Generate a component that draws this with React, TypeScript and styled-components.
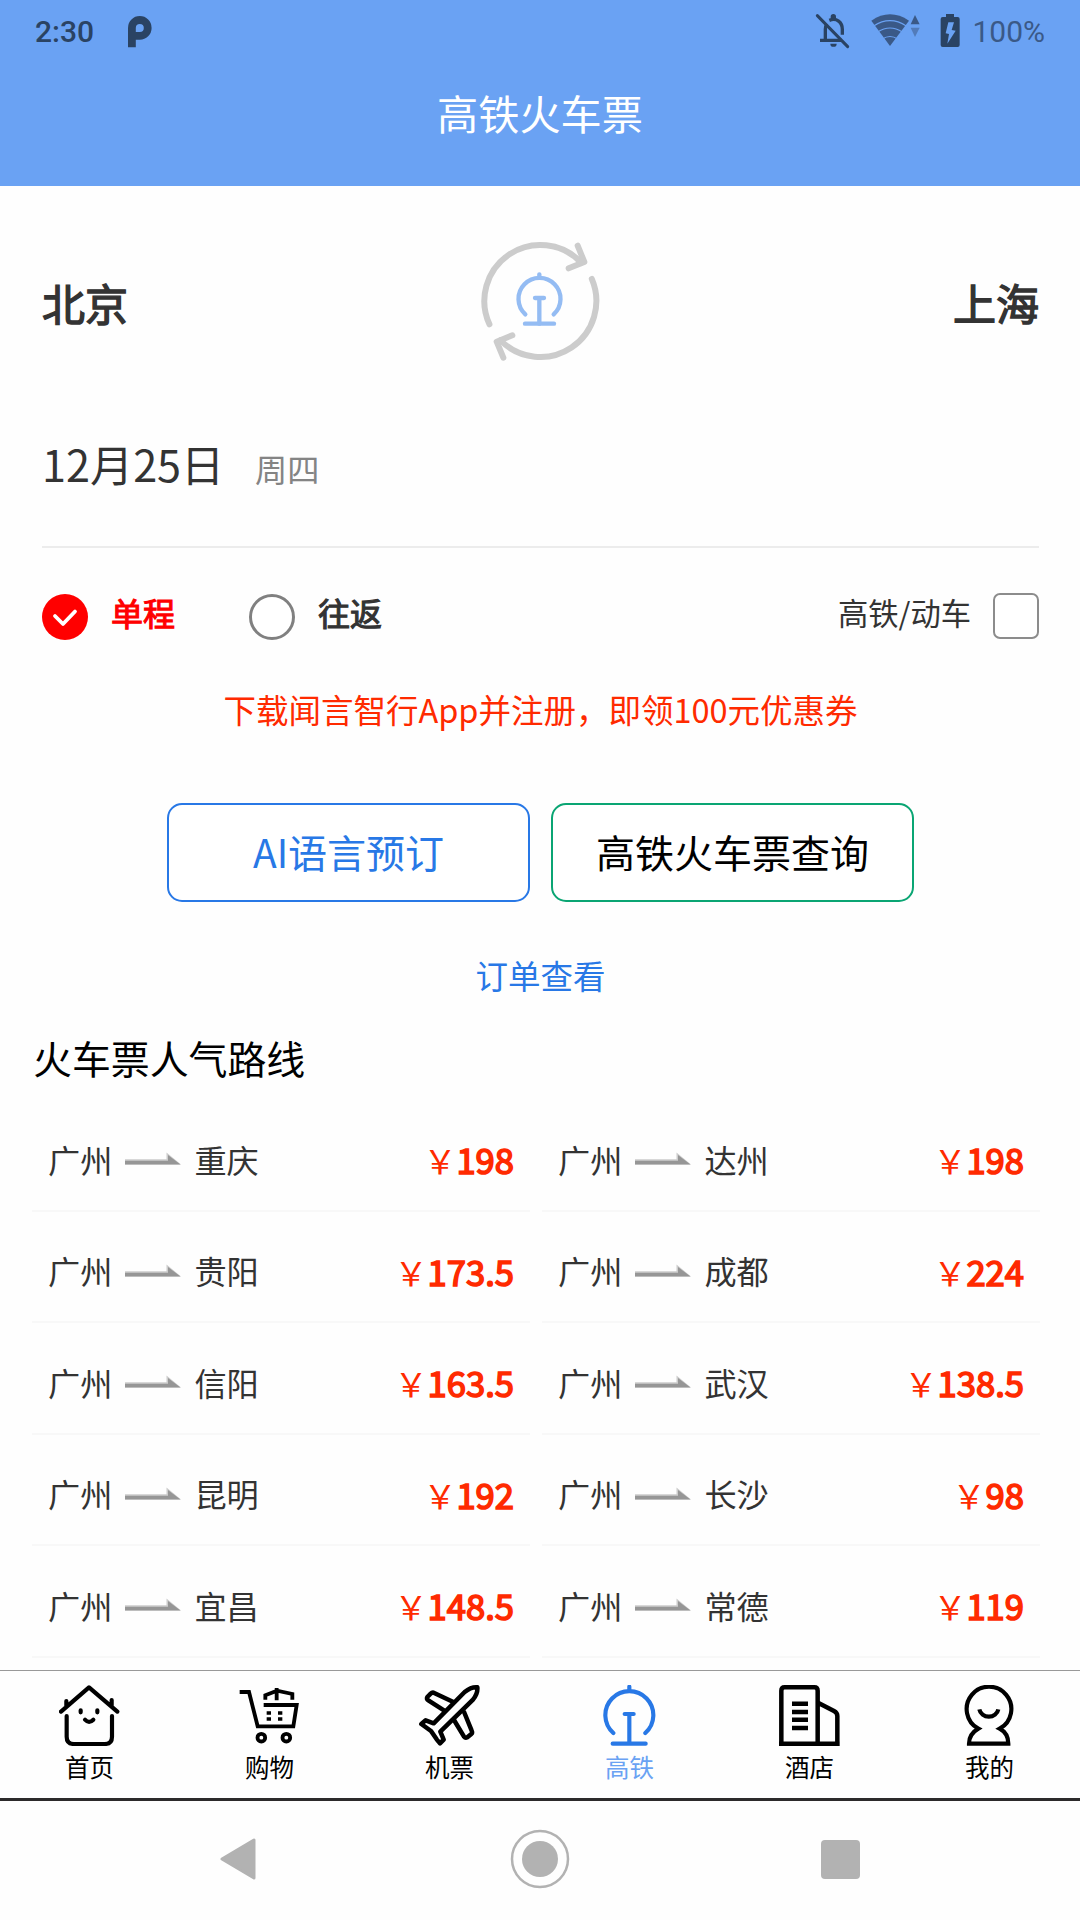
import React from "react";
import styled, { createGlobalStyle } from "styled-components";

const GlobalStyle = createGlobalStyle`
  * { box-sizing: border-box; }
  body { margin: 0; background: #fefefe; }
`;

const BLUE = "#2878e6";
const HEADER = "#6aa2f3";
const RED = "#ff2a00";

const Screen = styled.div`
  width: 1080px;
  height: 1920px;
  display: flex;
  flex-direction: column;
  overflow: hidden;
  background: #fefefe;
  color: #333;
  font-family: "Noto Sans CJK SC", "Noto Sans", sans-serif;
`;

const Header = styled.header`
  height: 186px;
  background: ${HEADER};
`;

const StatusBar = styled.div`
  height: 63px;
  padding: 0 35px;
  display: flex;
  align-items: center;
  justify-content: space-between;
  font-family: Roboto, sans-serif;
  font-size: 30px;
  line-height: 63px;
`;

const StatusGroup = styled.div`
  display: flex;
  align-items: center;
`;

const Clock = styled.span`
  width: 93px;
  font-weight: 500;
  color: #2a4363;
`;

const Percent = styled.span`
  color: #3a5987;
  font-size: 30px;
`;

const Title = styled.h1`
  margin: 0;
  height: 104px;
  line-height: 98px;
  text-align: center;
  font-size: 41.2px;
  font-weight: 400;
  color: #fff;
`;

const SearchPanel = styled.section`
  padding: 0 41px 0 42px;
`;

const CityRow = styled.div`
  height: 232px;
  display: flex;
  align-items: center;
  justify-content: space-between;
`;

const City = styled.div<{ $end?: boolean }>`
  width: 120px;
  padding-bottom: 1px;
  font-size: 43px;
  line-height: 60px;
  -webkit-text-stroke: 1.4px #333;
  text-align: ${(p) => (p.$end ? "right" : "left")};
`;

const SwapSvg = styled.svg`
  margin: 0 1px 4px 0;
`;

const DateRow = styled.div`
  height: 130px;
  display: flex;
  align-items: baseline;
  padding-top: 14px;
  border-bottom: 2px solid #ececec;
  line-height: 63px;
`;

const DateText = styled.span`
  font-size: 43.2px;
  width: 213px;
`;

const Weekday = styled.span`
  font-size: 32.2px;
  line-height: 50px;
  margin-bottom: 2px;
  color: #848484;
`;

const OptionRow = styled.div`
  height: 138px;
  display: flex;
  align-items: center;
`;

const Radio = styled.span<{ $on?: boolean }>`
  width: 46px;
  height: 46px;
  border-radius: 50%;
  border: ${(p) => (p.$on ? "0" : "3px solid #808080")};
  background: ${(p) => (p.$on ? "#f00" : "#fff")};
  display: flex;
`;

const OptionLabel = styled.span<{ $on?: boolean }>`
  width: 138px;
  margin-left: 23px;
  padding-bottom: 10px;
  font-size: 32px;
  line-height: 40px;
  color: ${(p) => (p.$on ? "#f00" : "#333")};
  -webkit-text-stroke: 1.1px ${(p) => (p.$on ? "#f00" : "#333")};
`;

const TypeLabel = styled.span`
  margin-left: auto;
  margin-right: 22px;
  padding-bottom: 10px;
  font-size: 30.3px;
  line-height: 40px;
`;

const Checkbox = styled.span`
  width: 46px;
  height: 46px;
  margin-bottom: 2px;
  border: 2px solid #8c8c8c;
  border-radius: 7px;
  background: #fff;
`;

const Promo = styled.p`
  margin: 0;
  height: 117px;
  line-height: 46px;
  text-align: center;
  font-size: 32.5px;
  color: ${RED};
`;

const ButtonRow = styled.div`
  display: flex;
  justify-content: center;
  gap: 21px;
`;

const ActionButton = styled.button<{ $line: string; $text: string }>`
  width: 363px;
  height: 99px;
  padding: 0 0 4px;
  border: 2px solid ${(p) => p.$line};
  border-radius: 15px;
  background: #fff;
  color: ${(p) => p.$text};
  font-family: inherit;
  font-size: 39px;
`;

const OrderLink = styled.a`
  display: block;
  height: 128px;
  padding-top: 50px;
  line-height: 46px;
  text-align: center;
  font-size: 32.5px;
  color: ${BLUE};
`;

const RoutesTitle = styled.h2`
  margin: 0;
  height: 70px;
  padding-left: 33px;
  line-height: 54px;
  font-size: 38.9px;
  font-weight: 400;
  color: #000;
`;

const RouteGrid = styled.section`
  display: grid;
  grid-template-columns: 498px 498px;
  column-gap: 12px;
  grid-auto-rows: 111.5px;
  padding-left: 32px;
`;

const RouteRow = styled.div`
  display: flex;
  align-items: center;
  padding: 14px 16px 6px 16px;
  border-bottom: 2px solid #f8f8f8;
  font-size: 32.2px;
  line-height: 44px;
`;

const ArrowSvg = styled.svg`
  margin: 0 13px;
`;

const Price = styled.span`
  margin-left: auto;
  padding-top: 2px;
  color: ${RED};
  display: flex;
  align-items: baseline;
  font-size: 33px;
`;

const Amount = styled.span`
  font-size: 34.6px;
  font-weight: 400;
  -webkit-text-stroke: 1.6px ${RED};
`;

const TabBar = styled.nav`
  height: 131px;
  margin-top: auto;
  display: grid;
  grid-template-columns: repeat(6, 1fr);
  border-top: 1px solid #999;
  border-bottom: 3px solid #2c2a2b;
  background: #fefefe;
`;

const Tab = styled.div<{ $active?: boolean }>`
  display: flex;
  flex-direction: column;
  align-items: center;
  padding: 14px 1px 0 0;
  font-size: 24.5px;
  line-height: 36px;
  color: ${(p) => (p.$active ? HEADER : "#000")};
  svg { margin-bottom: 3px; }
`;

const SystemNav = styled.footer`
  height: 119px;
  display: flex;
  align-items: center;
  justify-content: space-between;
  padding: 0 220px 3px;
`;

const HomeKey = styled.svg`
  margin: 0 -1px 1px 1px;
`;

const Body = styled.main`
  height: 1484px;
  overflow: hidden;
`;

const PIcon = () => (
  <svg width="24" height="32" viewBox="128 15.5 24 32" fill="none">
    <path d="M131.9 46.8V27.4a7.9 7.9 0 1 1 7.9 7.9h-7.9" stroke="#2a4363" strokeWidth="7.8" />
  </svg>
);

const StatusIcons = () => (
  <svg width="159" height="63" viewBox="100 0 477 189" fill="none">
    <g stroke="#2a4363" strokeWidth="10">
      <path d="M137 121V88q0-9 4-16M121 121h66M149 61c22-9 39 6 39 27v16" />
      <path d="M113 47l91 93" strokeWidth="9" strokeLinecap="round" />
    </g>
    <path d="M153 56v-6a8 8 0 0 1 16 0v6zM152 131h19a9.500 9.500 0 0 1-19 0z" fill="#2a4363" />
    <path d="M331 138L275 62Q331 24 388 62Z" fill="#3a5987" />
    <g stroke={HEADER} strokeWidth="3.500">
      <path d="M282 78Q331 46 380 78M294 96Q331 72 368 96M308 117Q331 102 354 117" />
    </g>
    <path d="M406 45l14 28h-27z" fill="#3a5987" />
    <path d="M393 83h27l-14 28z" fill="#527bb9" />
    <path d="M499 42h24v9h11q6 0 6 6v78q0 6-6 6h-45q-6 0-6-6V57q0-6 6-6h10z" fill="#2a4363" />
    <path d="M506 67h17l-7 23 12 2-25 39 5-29-10-2z" fill={HEADER} />
  </svg>
);

const SwapIcon = () => (
  <SwapSvg width="160" height="160" viewBox="0 0 480 480" fill="none" strokeLinecap="round">
    <g stroke="#ccc" strokeWidth="18">
      <path d="M88.300 312.900A168 168 0 0 1 362.700 127.100M395.400 176.800A168 168 0 0 1 121.200 360.800" />
      <path d="M353 77l20 49-47 19M157 346l-47 19 20 48" strokeLinejoin="round" />
    </g>
    <g stroke="#94bcf3" strokeWidth="13">
      <path d="M196 283A63 63 0 1 1 281 283M238 163v10M225 234h27M238 234v77" />
      <path d="M195 311h87" />
    </g>
  </SwapSvg>
);

const CheckIcon = () => (
  <svg width="46" height="46" viewBox="0 0 46 46" fill="none">
    <path d="M13 22l8 8 12-12.500" stroke="#fff" strokeWidth="3.800" strokeLinecap="round" strokeLinejoin="round" />
  </svg>
);

const RouteArrow = () => (
  <ArrowSvg width="56" height="13" viewBox="0 0 56 13">
    <path d="M0 7.200h41.500V.5L56 12.500H0z" fill="#ccc" />
    <path d="M0 8.700h43V3L55.500 12.500H0z" fill="#969696" />
  </ArrowSvg>
);

const icons: Record<string, React.ReactNode> = {
  home: (
    <svg width="61" height="61" viewBox="178 135 183 183" fill="none" stroke="#000" strokeWidth="12.500" strokeLinecap="round" strokeLinejoin="round">
      <path d="M184 215L268 142L353 215M200 183v15M336 180v18M201 228v62q0 22 22 22h92q22 0 22-22v-62" />
      <path d="M243 211v6M293 211v6M256 239q12 13 25 0" />
    </svg>
  ),
  cart: (
    <svg width="61" height="61" viewBox="718 135 183 183" fill="none" stroke="#000" strokeWidth="11.500">
      <path d="M720 156h28l26 103h107l10-64h-99" />
      <path d="M797 179v-13l35-14 46 10v17M831 144v37" />
      <path d="M801 219h13M835 219h13M801 237h13M835 237h13" strokeWidth="11" />
      <circle cx="785" cy="293" r="11.500" />
      <circle cx="860" cy="293" r="11.500" />
    </svg>
  ),
  plane: (
    <svg width="61" height="61" viewBox="178 135 183 183" fill="none" stroke="#000" strokeWidth="13.500" strokeLinejoin="round">
      <path d="M222 250L315 156Q335 140 353 142Q355 160 340 179L242 275L252 299L241 310L231 298L214 273L185 252L198 241Z" />
      <path d="M281 186L222 158Q217 157 213 161L203 171Q200 177 206 181L254 212M312 213L336 272Q339 278 335 282L323 292Q317 295 313 290L283 240" />
    </svg>
  ),
  train: (
    <svg width="61" height="61" viewBox="718 135 183 183" fill="none" stroke={BLUE} strokeWidth="12.500" strokeLinecap="round">
      <path d="M761 279A72 72 0 1 1 857 279M809 140v12M795 222h27M809 222v88M759 311h99" />
    </svg>
  ),
  hotel: (
    <svg width="61" height="61" viewBox="178 135 183 183" fill="none" stroke="#000" strokeWidth="13.500">
      <path d="M185 311V152q0-10 10-10h89q10 0 10 10v159M295 188l48 25q10 5 10 15v83M178 311h182" />
      <path d="M217 191h48M217 216h48M217 239h48M217 264h48" />
    </svg>
  ),
  mine: (
    <svg width="61" height="61" viewBox="718 135 183 183" fill="none" stroke="#000" strokeWidth="12.500">
      <path d="M776 266A67 67 0 1 1 840 266Q866 280 866 311H748Q748 282 776 266Z" />
      <path d="M779 208a29 27 0 0 0 57 0" />
    </svg>
  ),
};

const tabs = [
  { icon: "home", label: "首页" },
  { icon: "cart", label: "购物" },
  { icon: "plane", label: "机票" },
  { icon: "train", label: "高铁", active: true },
  { icon: "hotel", label: "酒店" },
  { icon: "mine", label: "我的" },
];

const routes: [string, string][] = [
  ["重庆", "198"],
  ["达州", "198"],
  ["贵阳", "173.5"],
  ["成都", "224"],
  ["信阳", "163.5"],
  ["武汉", "138.5"],
  ["昆明", "192"],
  ["长沙", "98"],
  ["宜昌", "148.5"],
  ["常德", "119"],
];

export default function App() {
  return (
    <Screen>
      <GlobalStyle />
      <Header>
        <StatusBar>
          <StatusGroup>
            <Clock>2:30</Clock>
            <PIcon />
          </StatusGroup>
          <StatusGroup>
            <StatusIcons />
            <Percent>100%</Percent>
          </StatusGroup>
        </StatusBar>
        <Title>高铁火车票</Title>
      </Header>
      <Body>
        <SearchPanel>
          <CityRow>
            <City>北京</City>
            <SwapIcon />
            <City $end>上海</City>
          </CityRow>
          <DateRow>
            <DateText>12月25日</DateText>
            <Weekday>周四</Weekday>
          </DateRow>
          <OptionRow>
            <Radio $on>
              <CheckIcon />
            </Radio>
            <OptionLabel $on>单程</OptionLabel>
            <Radio />
            <OptionLabel>往返</OptionLabel>
            <TypeLabel>高铁/动车</TypeLabel>
            <Checkbox />
          </OptionRow>
          <Promo>下载闻言智行App并注册，即领100元优惠券</Promo>
          <ButtonRow>
            <ActionButton $line={BLUE} $text={BLUE}>AI语言预订</ActionButton>
            <ActionButton $line="#0aa573" $text="#000">高铁火车票查询</ActionButton>
          </ButtonRow>
          <OrderLink>订单查看</OrderLink>
        </SearchPanel>
        <RoutesTitle>火车票人气路线</RoutesTitle>
        <RouteGrid>
          {routes.map(([to, price]) => (
            <RouteRow key={to}>
              <span>广州</span>
              <RouteArrow />
              <span>{to}</span>
              <Price>
                ￥<Amount>{price}</Amount>
              </Price>
            </RouteRow>
          ))}
        </RouteGrid>
      </Body>
      <TabBar>
        {tabs.map((t) => (
          <Tab key={t.label} $active={t.active}>
            {icons[t.icon]}
            {t.label}
          </Tab>
        ))}
      </TabBar>
      <SystemNav>
        <svg width="36" height="42" viewBox="0 0 36 42">
          <path d="M2 21L34 2v38z" fill="#b2b2b2" stroke="#b2b2b2" strokeWidth="3" strokeLinejoin="round" />
        </svg>
        <HomeKey width="60" height="60" viewBox="0 0 60 60">
          <circle cx="30" cy="30" r="28" fill="none" stroke="#b2b2b2" strokeWidth="2.500" />
          <circle cx="30" cy="30" r="18" fill="#b2b2b2" />
        </HomeKey>
        <svg width="39" height="39" viewBox="0 0 39 39">
          <rect width="39" height="39" rx="4" fill="#b2b2b2" />
        </svg>
      </SystemNav>
    </Screen>
  );
}
